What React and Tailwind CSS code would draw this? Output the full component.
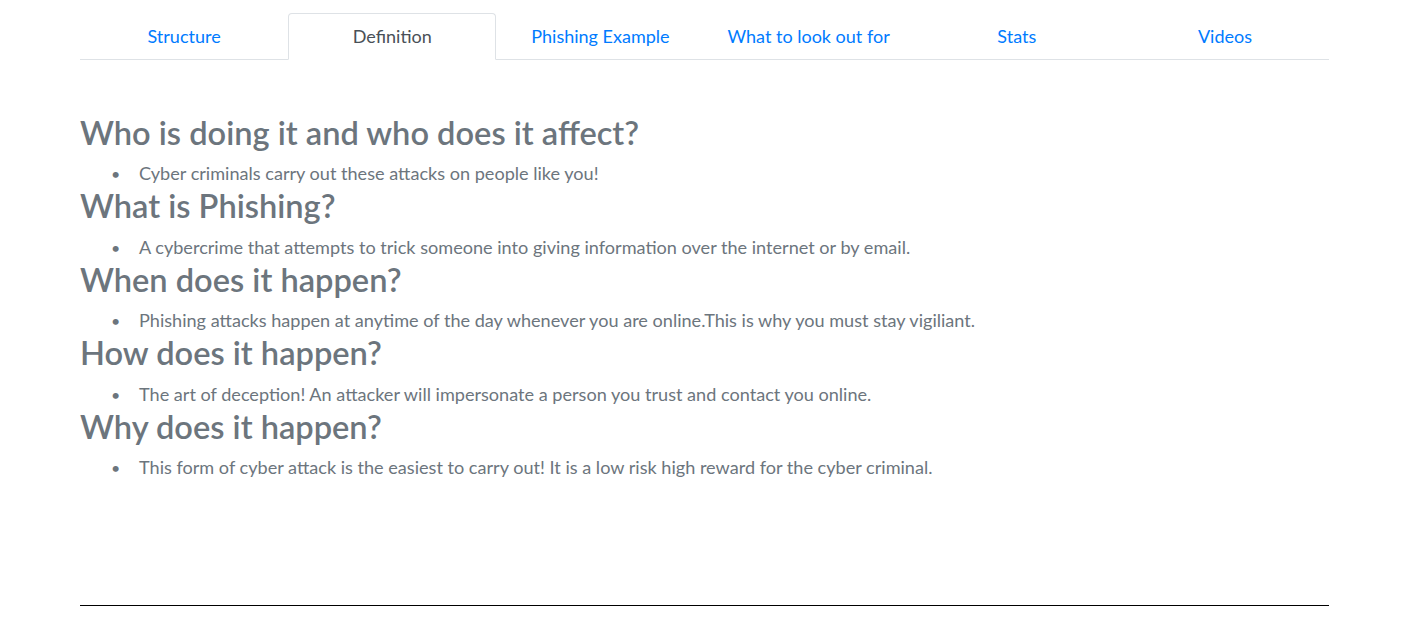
export default function App() {
  const tabs = ["Structure", "Definition", "Phishing Example", "What to look out for", "Stats", "Videos"];
  const sections = [
    ["Who is doing it and who does it affect?", "Cyber criminals carry out these attacks on people like you!"],
    ["What is Phishing?", "A cybercrime that attempts to trick someone into giving information over the internet or by email."],
    ["When does it happen?", "Phishing attacks happen at anytime of the day whenever you are online.This is why you must stay vigiliant."],
    ["How does it happen?", "The art of deception! An attacker will impersonate a person you trust and contact you online."],
    ["Why does it happen?", "This form of cyber attack is the easiest to carry out! It is a low risk high reward for the cyber criminal."],
  ];
  return (
    <div className="bg-white min-h-[639px] font-['Lato','Liberation_Sans',sans-serif]">
      <div className="ml-[80px] w-[1249px] pt-[13px]">
        <ul className="flex border-b border-[#dee2e6]">
          {tabs.map((t) => (
            <li key={t} className="flex-1 -mb-px">
              {t === "Definition" ? (
                <div className="text-center text-[18px] leading-[27px] py-[9px] border border-[#dee2e6] border-b-white rounded-t-[4px] text-[#495057] bg-white">
                  {t}
                </div>
              ) : (
                <div className="text-center text-[18px] leading-[27px] py-[9px] border border-transparent text-[#007bff]">
                  {t}
                </div>
              )}
            </li>
          ))}
        </ul>
        <div className="pt-[54px] text-[#6c757d]">
          {sections.map(([h, b]) => (
            <div key={h}>
              <h2 className="text-[32.6px] leading-[38.4px] font-semibold mb-[8px]">{h}</h2>
              <ul className="pl-[31px] text-[18.1px] leading-[27px]">
                <li className="flex">
                  <span className="w-[28px] shrink-0 text-[16px]">•</span>
                  <span>{b}</span>
                </li>
              </ul>
            </div>
          ))}
        </div>
        <div className="mt-[124px] border-t border-black" />
      </div>
    </div>
  );
}
